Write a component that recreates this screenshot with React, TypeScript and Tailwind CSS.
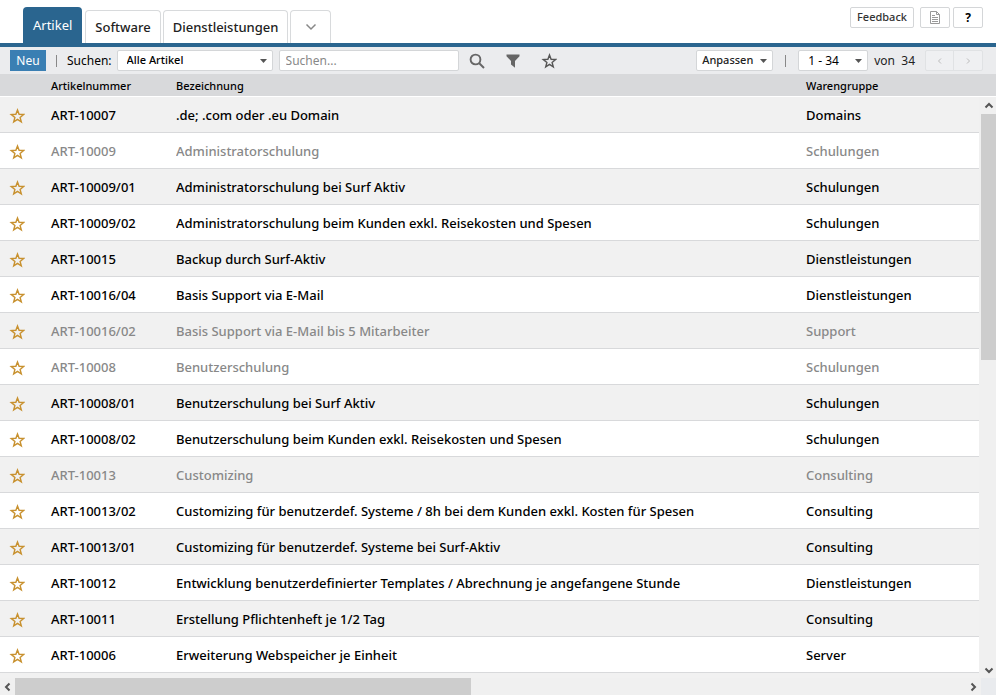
import { useState } from "react";
import clsx from "clsx";

const tabs = ["Software", "Dienstleistungen"];

const articles = [
  { nr: "ART-10007", name: ".de; .com oder .eu Domain", group: "Domains" },
  { nr: "ART-10009", name: "Administratorschulung", group: "Schulungen", inactive: true },
  { nr: "ART-10009/01", name: "Administratorschulung bei Surf Aktiv", group: "Schulungen" },
  { nr: "ART-10009/02", name: "Administratorschulung beim Kunden exkl. Reisekosten und Spesen", group: "Schulungen" },
  { nr: "ART-10015", name: "Backup durch Surf-Aktiv", group: "Dienstleistungen" },
  { nr: "ART-10016/04", name: "Basis Support via E-Mail", group: "Dienstleistungen" },
  { nr: "ART-10016/02", name: "Basis Support via E-Mail bis 5 Mitarbeiter", group: "Support", inactive: true },
  { nr: "ART-10008", name: "Benutzerschulung", group: "Schulungen", inactive: true },
  { nr: "ART-10008/01", name: "Benutzerschulung bei Surf Aktiv", group: "Schulungen" },
  { nr: "ART-10008/02", name: "Benutzerschulung beim Kunden exkl. Reisekosten und Spesen", group: "Schulungen" },
  { nr: "ART-10013", name: "Customizing", group: "Consulting", inactive: true },
  { nr: "ART-10013/02", name: "Customizing für benutzerdef. Systeme / 8h bei dem Kunden exkl. Kosten für Spesen", group: "Consulting" },
  { nr: "ART-10013/01", name: "Customizing für benutzerdef. Systeme bei Surf-Aktiv", group: "Consulting" },
  { nr: "ART-10012", name: "Entwicklung benutzerdefinierter Templates / Abrechnung je angefangene Stunde", group: "Dienstleistungen" },
  { nr: "ART-10011", name: "Erstellung Pflichtenheft je 1/2 Tag", group: "Consulting" },
  { nr: "ART-10006", name: "Erweiterung Webspeicher je Einheit", group: "Server" },
];

function Star() {
  return (
    <svg width="16" height="16" viewBox="0 0 16 16" fill="none" stroke="currentColor" strokeWidth="1.4">
      <path d="M8.500 2l1.600 4.300 4.600.2-3.600 2.900 1.200 4.400-3.800-2.500-3.800 2.500 1.200-4.400-3.600-2.900 4.600-.2z" />
    </svg>
  );
}

function Caret() {
  return (
    <svg width="7" height="4" viewBox="0 0 7 4" fill="#555">
      <path d="M0 0h7L3.500 4z" />
    </svg>
  );
}

function Chevron({ d, className }: { d: string; className?: string }) {
  return (
    <svg width="10" height="10" viewBox="0 0 10 10" fill="none" stroke="currentColor" className={className}>
      <path d={d} />
    </svg>
  );
}

function Select({ label, options, className }: { label: string; options: string[]; className: string }) {
  return (
    <div className={clsx("relative h-[21px] shrink-0", className)}>
      <select
        aria-label={label}
        className="h-full w-full appearance-none rounded-xs border border-[#d4d6d8] bg-white pr-5 pl-[9px] text-black"
      >
        {options.map((o) => (
          <option key={o}>{o}</option>
        ))}
      </select>
      <span className="pointer-events-none absolute inset-y-0 right-1.5 flex items-center">
        <Caret />
      </span>
    </div>
  );
}

function Toolbar() {
  const [query, setQuery] = useState("");

  return (
    <div className="flex h-[27px] shrink-0 items-center bg-[#ebecee] pr-[13px] pl-2.5 text-xs">
      <button className="h-[21px] w-9 bg-[#3a7fb3] text-white">Neu</button>
      <span className="mx-2.5 h-3 w-px bg-[#888]" />
      <span className="mr-[5px] text-black">Suchen:</span>
      <Select label="Suchen" options={["Alle Artikel"]} className="w-[156px] text-[11px] font-medium" />
      <input
        aria-label="Suchbegriff"
        placeholder="Suchen..."
        value={query}
        onChange={(e) => setQuery(e.target.value)}
        className="ml-1.5 h-[21px] w-[180px] rounded-xs border border-[#d4d6d8] bg-white px-1.5 placeholder:text-[#888]"
      />
      <button aria-label="Suche starten" className="ml-2.5 text-[#666]">
        <svg width="16" height="16" viewBox="0 0 16 16" fill="none" stroke="currentColor" strokeWidth="1.900">
          <circle cx="6.500" cy="6.500" r="4.900" />
          <path d="M10 10l5 5" />
        </svg>
      </button>
      <button aria-label="Filter" className="ml-5 text-[#666]">
        <svg width="16" height="16" viewBox="0 0 16 16" fill="currentColor">
          <path d="M1.500 1.500h13v1.700L10 8v6.800L6 11.500V8L1.500 3.200z" />
        </svg>
      </button>
      <button aria-label="Favoriten" className="ml-5 text-[#555]">
        <Star />
      </button>

      <div className="ml-auto flex items-center">
        <button className="flex h-[21px] w-[77px] items-center justify-center gap-[7px] rounded-xs border border-[#d4d6d8] bg-white text-[11px] font-medium text-[#222]">
          Anpassen
          <Caret />
        </button>
        <span className="mx-3 h-3 w-px bg-[#888]" />
        <Select label="Seite" options={["1 - 34"]} className="w-[70px]" />
        <span className="ml-1.5 whitespace-pre text-[#222]">von  34</span>
        <div className="ml-2.5 flex h-[21px] rounded-xs border border-[#e0e2e4] bg-[#eff0f2] text-[#bbb]">
          <button aria-label="Zurück" disabled className="flex w-7 items-center justify-center border-r border-[#e0e2e4]">
            <Chevron d="M6 2.500L3.500 5 6 7.500" />
          </button>
          <button aria-label="Weiter" disabled className="flex w-7 items-center justify-center">
            <Chevron d="M4 2.500L6.500 5 4 7.500" />
          </button>
        </div>
      </div>
    </div>
  );
}

export default function App() {
  return (
    <div className="flex h-screen flex-col overflow-hidden bg-white font-['Noto_Sans','Open_Sans',sans-serif] text-black">
      <header className="flex h-[47px] shrink-0 items-end border-b-4 border-[#2a658f] pr-[13px] pl-[23px] text-[13px]">
        <nav className="flex items-end gap-[3px]">
          <a href="#artikel" className="flex h-9 items-center rounded-t bg-[#2a658f] px-2.5 pt-0.5 text-white">
            Artikel
          </a>
          <div className="flex gap-0.5">
            {tabs.map((tab) => (
              <a
                key={tab}
                href={`#${tab}`}
                className="flex h-[33px] items-center rounded-t border border-b-0 border-[#d8dadc] px-[9px] pt-0.5 font-medium text-[#222]"
              >
                {tab}
              </a>
            ))}
            <button
              aria-label="Weitere Tabs"
              className="flex h-[33px] w-[41px] items-center justify-center rounded-t border border-b-0 border-[#d8dadc] text-[#888]"
            >
              <svg width="12" height="8" viewBox="0 0 12 8" fill="none" stroke="currentColor" strokeWidth="1.500">
                <path d="M1.500 1.500L6 6l4.500-4.500" />
              </svg>
            </button>
          </div>
        </nav>
        <div className="mb-[15px] ml-auto flex gap-[3px] text-[11px] font-medium text-[#333]">
          <button className="mr-[3px] h-[21px] w-16 rounded-xs border border-[#d4d6d8]">Feedback</button>
          <button
            aria-label="Notizen"
            className="flex h-[21px] w-[30px] items-center justify-center rounded-xs border border-[#d4d6d8]"
          >
            <svg width="12" height="13" viewBox="0 0 12 13" fill="none" stroke="#999">
              <path d="M1.500.5h6l3 3v9h-9z" />
              <path d="M7.500.5v3h3M3 4.500h3M3 6.500h6M3 8.500h6M3 10.500h6" />
            </svg>
          </button>
          <button className="h-[21px] w-[30px] rounded-xs border border-[#d4d6d8] text-xs font-bold text-black">?</button>
        </div>
      </header>

      <Toolbar />

      <div className="flex min-h-0 flex-1">
        <div className="min-w-0 flex-1 overflow-hidden bg-[#f1f1f1]">
          <table className="w-full table-fixed text-left">
            <thead>
              <tr className="h-[22px] border-b border-white bg-[#d8d9db] text-[11px]">
                <th aria-label="Favorit" className="w-[51px]" />
                <th className="w-[125px] pt-[3px] font-medium">Artikelnummer</th>
                <th className="pt-[3px] font-medium">Bezeichnung</th>
                <th className="w-[173px] pt-[3px] font-medium">Warengruppe</th>
              </tr>
            </thead>
            <tbody className="text-[13px] font-medium">
              {articles.map((a) => (
                <tr
                  key={a.nr}
                  className={clsx(
                    "h-9 border-b border-[#d8d9db] odd:bg-[#f1f1f1] even:bg-white",
                    a.inactive && "text-[#888]"
                  )}
                >
                  <td className="pt-[3px] pl-[9px]">
                    <button aria-label="Als Favorit merken" className="block text-[#c8912f]">
                      <Star />
                    </button>
                  </td>
                  <td className="pt-[3px]">{a.nr}</td>
                  <td className="truncate pt-[3px]">{a.name}</td>
                  <td className="pt-[3px]">{a.group}</td>
                </tr>
              ))}
            </tbody>
          </table>
        </div>

        {/* vertical scrollbar */}
        <div className="flex w-[17px] flex-col bg-[#f0f0f0]">
          <div className="h-[23px] shrink-0 border-b border-white bg-[#d8d9db]" />
          <div className="flex flex-1 flex-col pl-0.5 text-[#555]">
            <button aria-label="Nach oben" className="flex h-[17px] items-center justify-center">
              <Chevron d="M1.500 6.500L5 3l3.500 3.500" className="stroke-2" />
            </button>
            <div className="flex-1">
              <div className="h-[45%] bg-[#cdcdcd]" />
            </div>
            <button aria-label="Nach unten" className="flex h-[17px] items-center justify-center">
              <Chevron d="M1.500 3.500L5 7l3.500-3.500" className="stroke-2" />
            </button>
          </div>
        </div>
      </div>

      {/* horizontal scrollbar */}
      <div className="flex h-[17px] shrink-0 bg-[#f0f0f0] text-[#555]">
        <button aria-label="Nach links" className="flex w-[15px] items-center justify-center">
          <Chevron d="M6.500 1.500L3 5l3.500 3.500" className="stroke-2" />
        </button>
        <div className="flex-1">
          <div className="h-full w-[48%] bg-[#cdcdcd]" />
        </div>
        <button aria-label="Nach rechts" className="flex w-[17px] items-center justify-center">
          <Chevron d="M3.500 1.500L7 5 3.500 8.500" className="stroke-2" />
        </button>
        <div className="w-[15px] bg-[#e9ebee]" />
      </div>
    </div>
  );
}
